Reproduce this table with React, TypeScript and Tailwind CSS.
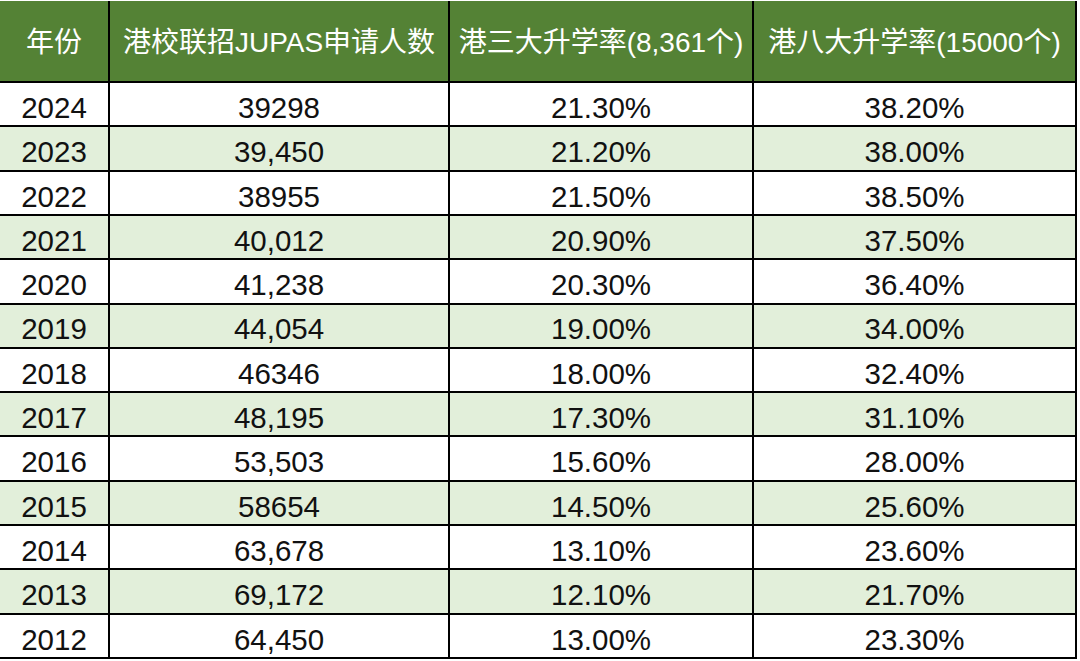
const headers = ["年份", "港校联招JUPAS申请人数", "港三大升学率(8,361个)", "港八大升学率(15000个)"];

const rows: [string, string, string, string][] = [
  ["2024", "39298", "21.30%", "38.20%"],
  ["2023", "39,450", "21.20%", "38.00%"],
  ["2022", "38955", "21.50%", "38.50%"],
  ["2021", "40,012", "20.90%", "37.50%"],
  ["2020", "41,238", "20.30%", "36.40%"],
  ["2019", "44,054", "19.00%", "34.00%"],
  ["2018", "46346", "18.00%", "32.40%"],
  ["2017", "48,195", "17.30%", "31.10%"],
  ["2016", "53,503", "15.60%", "28.00%"],
  ["2015", "58654", "14.50%", "25.60%"],
  ["2014", "63,678", "13.10%", "23.60%"],
  ["2013", "69,172", "12.10%", "21.70%"],
  ["2012", "64,450", "13.00%", "23.30%"],
];

export default function App() {
  return (
    <div
      className="w-[1080px] h-[661px] bg-white pt-px overflow-hidden"
      style={{ fontFamily: '"Liberation Sans", "Noto Sans CJK SC", sans-serif' }}
    >
      <div className="w-[1077px] h-[658px] bg-black pr-[2px] pb-[2px] grid grid-cols-[108px_338px_302px_321px] grid-rows-[80px_repeat(13,1fr)] gap-[2px]">
        {headers.map((h) => (
          <div
            key={h}
            className="bg-[#548235] text-white text-[28px] flex items-center justify-center whitespace-nowrap pt-[3px]"
          >
            {h}
          </div>
        ))}
        {rows.map((r, i) =>
          r.map((cell, j) => (
            <div
              key={`${i}-${j}`}
              className={`${i % 2 === 1 ? "bg-[#e2efda]" : "bg-white"} text-[#111] text-[29.5px] flex items-center justify-center pt-[7px] leading-none`}
            >
              {cell}
            </div>
          ))
        )}
      </div>
    </div>
  );
}
